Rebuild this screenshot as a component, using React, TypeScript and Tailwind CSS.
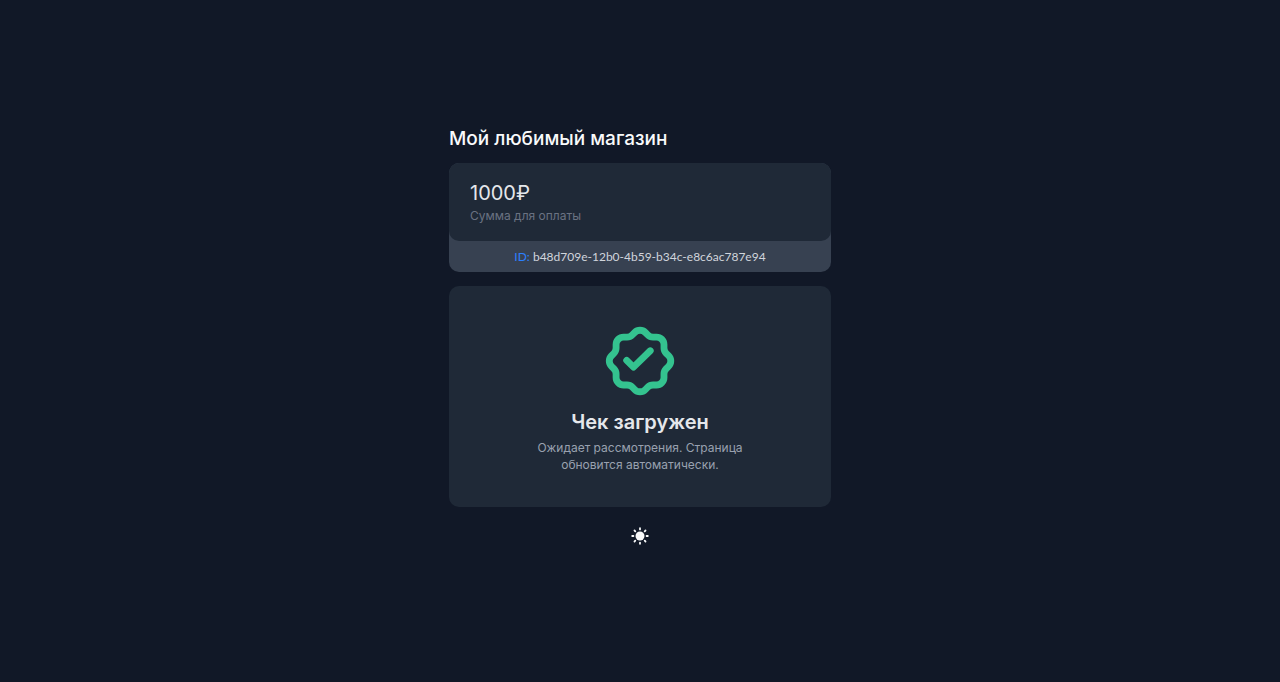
import { useState } from "react";

function ApprovedBadge() {
  return (
    <svg
      className="size-[82px] text-[#34c38f]"
      viewBox="0 0 24 24"
      fill="none"
      stroke="currentColor"
      strokeWidth="2"
      strokeLinecap="round"
      strokeLinejoin="round"
      aria-hidden="true"
    >
      <path d="M5 7.2a2.2 2.2 0 0 1 2.2 -2.2h1a2.2 2.2 0 0 0 1.55 -.64l.7 -.7a2.2 2.2 0 0 1 3.12 0l.7 .7c.412 .41 .97 .64 1.55 .64h1a2.2 2.2 0 0 1 2.2 2.2v1c0 .58 .23 1.138 .64 1.55l.7 .7a2.2 2.2 0 0 1 0 3.12l-.7 .7a2.2 2.2 0 0 0 -.64 1.55v1a2.2 2.2 0 0 1 -2.2 2.2h-1a2.2 2.2 0 0 0 -1.55 .64l-.7 .7a2.2 2.2 0 0 1 -3.12 0l-.7 -.7a2.2 2.2 0 0 0 -1.55 -.64h-1a2.2 2.2 0 0 1 -2.2 -2.2v-1a2.2 2.2 0 0 0 -.64 -1.55l-.7 -.7a2.2 2.2 0 0 1 0 -3.12l.7 -.7a2.2 2.2 0 0 0 .64 -1.55v-1" />
      <path d="M8.1 11.8l2 2l4.9 -4.8" />
    </svg>
  );
}

function SunIcon() {
  return (
    <svg
      className="size-5"
      viewBox="0 0 20 20"
      stroke="currentColor"
      strokeWidth="1.8"
      strokeLinecap="round"
      aria-hidden="true"
    >
      <circle cx="10" cy="10" r="4.5" fill="currentColor" stroke="none" />
      <path d="M10 2.2v1.2M10 16.6v1.2M2.2 10h1.2M16.6 10h1.2M4.5 4.5l.8 .8M14.7 14.7l.8 .8M4.5 15.5l.8 -.8M14.7 5.3l.8 -.8" />
    </svg>
  );
}

export default function App() {
  const [light, setLight] = useState(false);

  return (
    <main className="flex min-h-screen flex-col items-center justify-center bg-[#111827] px-4 pb-3 font-['Inter','Noto_Sans',sans-serif]">
      <div className="flex w-full max-w-[382px] flex-col">
        <h1 className="mb-2.5 text-[19px] leading-7 font-medium text-gray-50">Мой любимый магазин</h1>

        <section className="mb-3.5 rounded-[10px] bg-[#374151]">
          <div className="rounded-[10px] bg-[#1f2937] px-[21px] pt-4 pb-4">
            <p className="text-xl leading-7 text-gray-200">1000₽</p>
            <p className="text-xs leading-[18px] text-gray-500">Сумма для оплаты</p>
          </div>
          <p className="pt-[7px] pb-1.5 text-center font-['Lato','Inter',sans-serif] text-xs leading-[18px] text-gray-300">
            <span className="text-blue-500">ID:</span> b48d709e-12b0-4b59-b34c-e8c6ac787e94
          </p>
        </section>

        <section className="flex flex-col items-center rounded-[10px] bg-[#1f2937] px-20 py-[34px] text-center">
          <ApprovedBadge />
          <h2 className="mt-1.5 text-xl leading-7 font-semibold text-gray-200">Чек загружен</h2>
          <p className="mt-[3px] text-xs leading-[17px] text-gray-400">
            Ожидает рассмотрения. Страница обновится автоматически.
          </p>
        </section>

        <button
          type="button"
          aria-label="Сменить тему"
          aria-pressed={light}
          onClick={() => setLight(!light)}
          className="mt-[19px] cursor-pointer self-center text-gray-50"
        >
          <SunIcon />
        </button>
      </div>
    </main>
  );
}
